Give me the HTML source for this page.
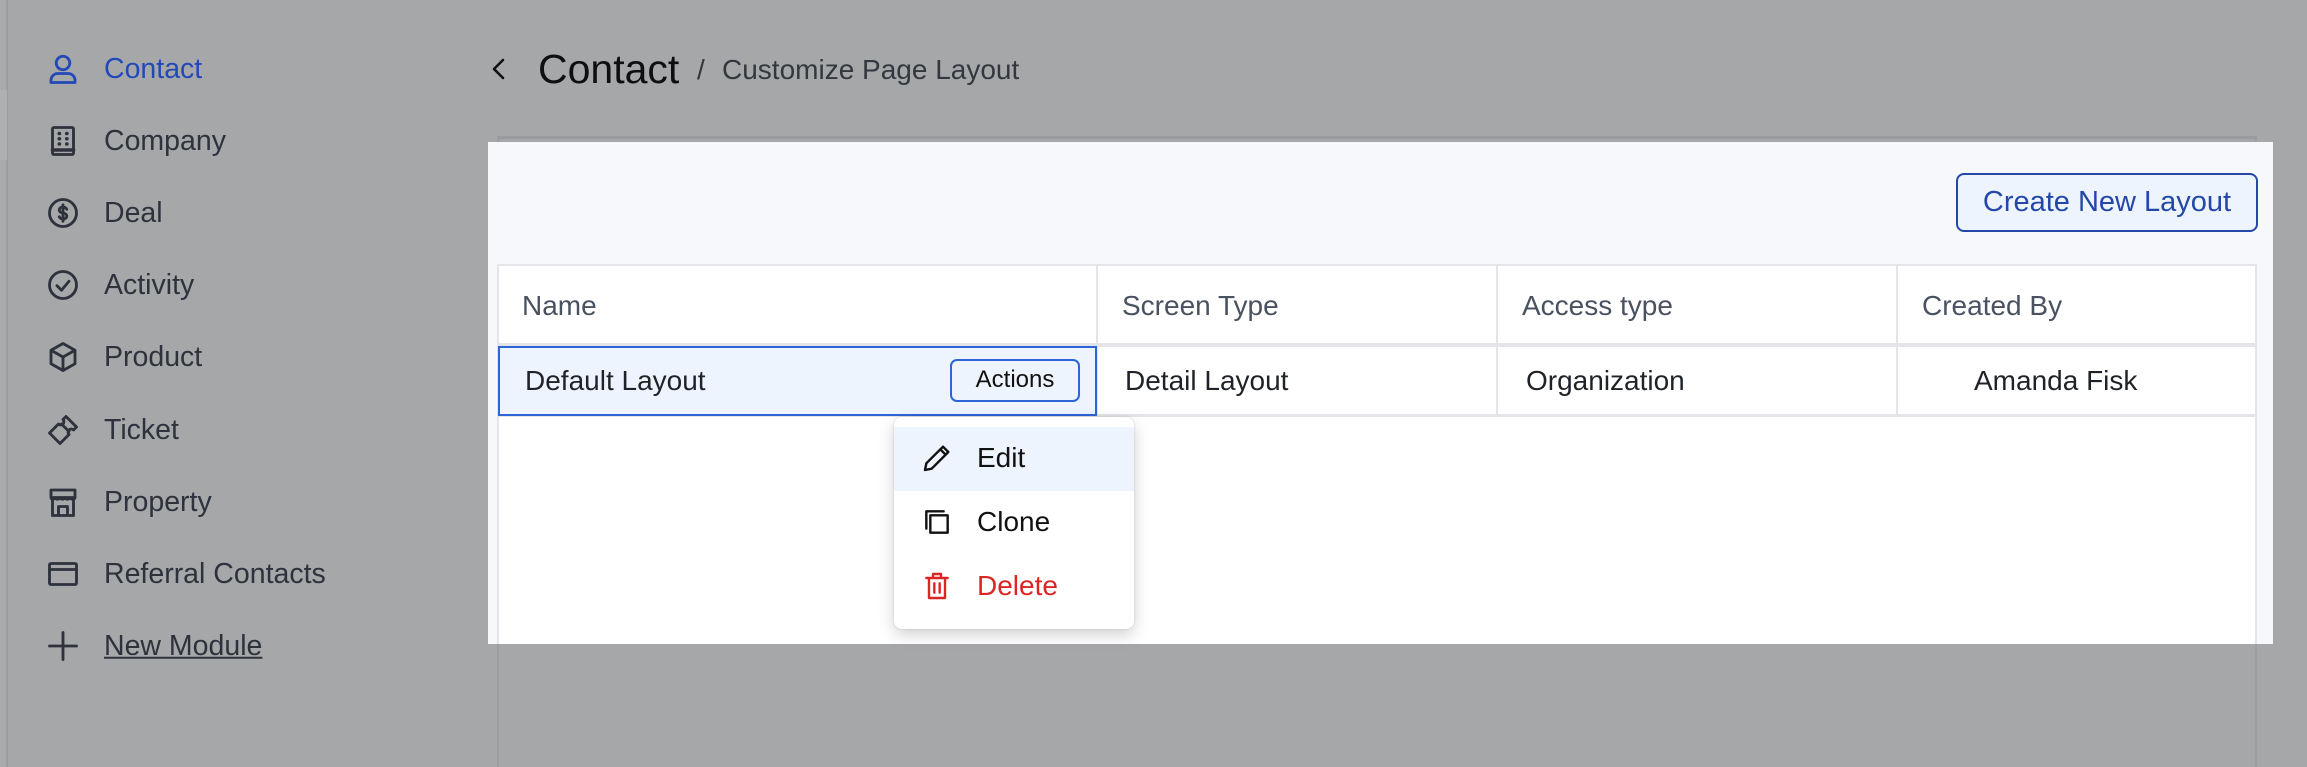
<!DOCTYPE html>
<html><head><meta charset="utf-8"><style>
*{margin:0;padding:0;box-sizing:border-box}
body{width:2307px;height:767px;background:#a6a7a9;font-family:"Liberation Sans",Arial,sans-serif;position:relative;overflow:hidden}
.a{position:absolute;white-space:nowrap}
.nav{position:absolute;left:104px;font-size:28.5px;color:#2d323c;line-height:1;transform:translateY(-50%)}
.ic{position:absolute;left:45px;width:36px;height:36px;transform:translateY(-50%)}
.ic svg{width:36px;height:36px}
.ic svg *{fill:none;stroke:#2d323c;stroke-width:1.9;stroke-linecap:round;stroke-linejoin:round}
.th{position:absolute;top:306px;font-size:28px;color:#4a5261;transform:translateY(-50%)}
.td{position:absolute;top:381px;font-size:28px;color:#1f2328;transform:translateY(-50%)}
.vl{position:absolute;width:2px;background:#e3e5e9}
.mi{position:absolute;left:977px;font-size:28px;color:#111;transform:translateY(-50%)}
.mic{position:absolute;left:921px;width:32px;height:32px;transform:translateY(-50%)}
.mic svg{width:32px;height:32px}
.mic svg *{fill:none;stroke-width:1.8;stroke-linecap:round;stroke-linejoin:round}
</style></head><body>
<div class="a" style="left:0;top:0;width:8px;height:767px;background:#a9aaac;border-right:2px solid #9c9da0"></div>
<div class="a" style="left:0;top:90px;width:7px;height:70px;background:#aeb0b4"></div>

<div class="ic" style="top:69px"><svg viewBox="0 0 24 24"><circle cx="12" cy="8" r="4.5" style="stroke:#2349b8"/><path style="stroke:#2349b8" d="M4 21v-1.5A4.5 4.5 0 0 1 8.5 15h7a4.5 4.5 0 0 1 4.5 4.5V21z"/></svg></div>
<div class="nav" style="top:69px;color:#2349b8">Contact</div>
<div class="ic" style="top:141px"><svg viewBox="0 0 24 24"><rect x="5" y="3" width="14" height="18" rx="1"/><path d="M9.5 7h.1M14.5 7h.1M9.5 10.5h.1M14.5 10.5h.1M9.5 14h.1M14.5 14h.1M5 18h14" style="stroke-width:2.4"/></svg></div>
<div class="nav" style="top:141px">Company</div>
<div class="ic" style="top:213px"><svg viewBox="0 0 24 24"><circle cx="12" cy="12" r="9"/><path d="M14.5 9.5c-.5-1-1.5-1.5-2.5-1.5-1.5 0-2.5.8-2.5 2s1 1.7 2.5 2 2.5.8 2.5 2-1 2-2.5 2c-1 0-2-.5-2.5-1.5M12 6.5v11"/></svg></div>
<div class="nav" style="top:213px">Deal</div>
<div class="ic" style="top:285px"><svg viewBox="0 0 24 24"><circle cx="12" cy="12" r="9"/><path d="M8 12.5l3 3 5-6"/></svg></div>
<div class="nav" style="top:285px">Activity</div>
<div class="ic" style="top:357px"><svg viewBox="0 0 24 24"><path d="M12 3l8 4.5v9L12 21l-8-4.5v-9z M4 7.5l8 4.5 8-4.5 M12 12v9"/></svg></div>
<div class="nav" style="top:357px">Product</div>
<div class="ic" style="top:430px"><svg viewBox="0 0 24 24"><path d="M14 3l7 7-2 2a2 2 0 0 0-3 3l-6 6-7-7 6-6a2 2 0 0 0 3-3z M11 8l5 5"/></svg></div>
<div class="nav" style="top:430px">Ticket</div>
<div class="ic" style="top:502px"><svg viewBox="0 0 24 24"><path d="M4 4h16v5H4z M4 9c0 1.5 2 1.5 2.7 0 .6 1.5 2.6 1.5 3.3 0 .6 1.5 2.7 1.5 3.3 0 .6 1.5 2.7 1.5 3.3 0 .7 1.5 3.4 1.5 3.4 0 M5 10v11h14V10 M9 21v-6h6v6"/></svg></div>
<div class="nav" style="top:502px">Property</div>
<div class="ic" style="top:574px"><svg viewBox="0 0 24 24"><rect x="3" y="5" width="18" height="14" rx="1"/><path d="M3 9h18"/></svg></div>
<div class="nav" style="top:574px">Referral Contacts</div>
<div class="ic" style="top:646px"><svg viewBox="0 0 24 24"><path d="M12 3v18M3 12h18"/></svg></div>
<div class="nav" style="top:646px;text-decoration:underline">New Module</div>

<svg class="a" style="left:489px;top:57px" width="20" height="24" viewBox="0 0 20 24"><path d="M14 3L5 12l9 9" fill="none" stroke="#111" stroke-width="2.6" stroke-linecap="round" stroke-linejoin="round"/></svg>
<div class="a" style="left:538px;top:45px;font-size:41px;color:#0e0f11;line-height:48px">Contact</div>
<div class="a" style="left:697px;top:53px;font-size:28px;color:#33373e;line-height:34px">/</div>
<div class="a" style="left:722px;top:53px;font-size:28px;color:#33373e;line-height:34px">Customize Page Layout</div>

<div class="a" style="left:497px;top:136px;width:1760px;height:631px;border-left:2px solid #9c9da0;border-right:2px solid #9c9da0;border-top:3px solid #9a9b9e"></div>
<div class="a" style="left:488px;top:142px;width:1785px;height:502px;background:#f6f8fc"></div>
<div class="a" style="left:1956px;top:173px;width:302px;height:59px;border:2.5px solid #2447a8;border-radius:8px;background:#eef4fe;color:#2447a8;font-size:29px;text-align:center;line-height:54px">Create New Layout</div>

<div class="a" style="left:497px;top:264px;width:1760px;height:380px;background:#fff;border:2px solid #e3e5e9;border-bottom:none"></div>
<div class="a" style="left:497px;top:343px;width:1760px;height:4px;background:#e3e5e9"></div>
<div class="a" style="left:497px;top:414px;width:1760px;height:3px;background:#e3e5e9"></div>
<div class="vl" style="left:1096px;top:265px;height:150px"></div>
<div class="vl" style="left:1496px;top:265px;height:150px"></div>
<div class="vl" style="left:1896px;top:265px;height:150px"></div>
<div class="th" style="left:522px">Name</div>
<div class="th" style="left:1122px">Screen Type</div>
<div class="th" style="left:1522px">Access type</div>
<div class="th" style="left:1922px">Created By</div>

<div class="a" style="left:498px;top:346px;width:599px;height:70px;background:#eef4fe;border:2.5px solid #2d65d8"></div>
<div class="td" style="left:525px">Default Layout</div>
<div class="a" style="left:950px;top:359px;width:130px;height:43px;border:2.5px solid #2d65d8;border-radius:7px;background:#eef4fe;font-size:24px;text-align:center;line-height:38px;color:#111">Actions</div>
<div class="td" style="left:1125px">Detail Layout</div>
<div class="td" style="left:1526px">Organization</div>
<div class="td" style="left:1974px">Amanda Fisk</div>

<div class="a" style="left:894px;top:417px;width:240px;height:212px;background:#fff;border-radius:8px;box-shadow:0 6px 16px rgba(0,0,0,.18),0 0 2px rgba(0,0,0,.15);overflow:hidden">
<div style="position:absolute;left:0;top:10px;width:240px;height:64px;background:#eef4fe"></div></div>
<div class="mic" style="top:458px"><svg viewBox="0 0 24 24"><path style="stroke:#111" d="M16.5 3.5l4 4L8 20l-5 1 1-5z M14.5 5.5l4 4"/></svg></div>
<div class="mi" style="top:458px">Edit</div>
<div class="mic" style="top:522px"><svg viewBox="0 0 24 24"><path style="stroke:#111" d="M4 17V4h13"/><rect style="stroke:#111" x="7" y="7" width="13" height="13"/></svg></div>
<div class="mi" style="top:522px">Clone</div>
<div class="mic" style="top:586px"><svg viewBox="0 0 24 24"><path style="stroke:#dc2626" d="M4 6h16M9 6V3h6v3M6 6v15h12V6M10 10v7M14 10v7"/></svg></div>
<div class="mi" style="top:586px;color:#dc2626">Delete</div>
</body></html>
